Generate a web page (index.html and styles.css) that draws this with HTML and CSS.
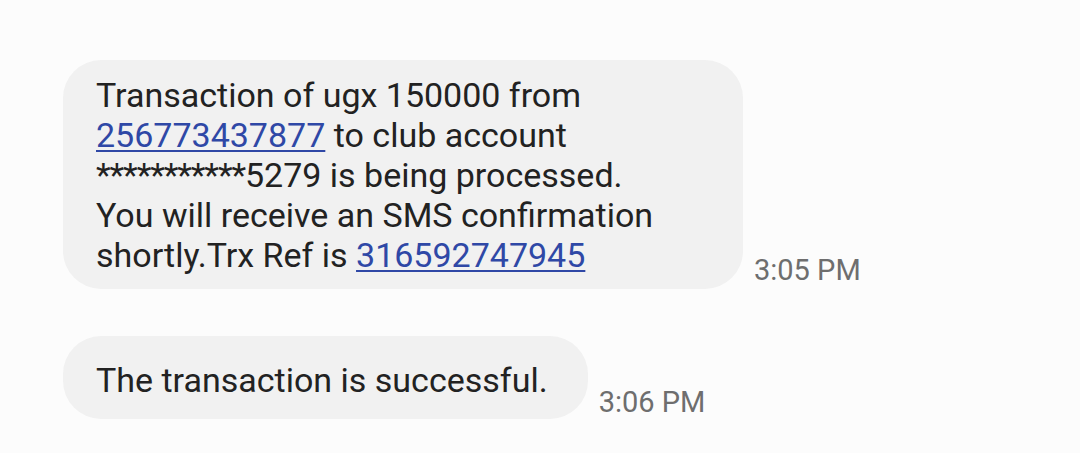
FILE: index.html
```html
<!DOCTYPE html>
<html>
<head>
<meta charset="utf-8">
<link rel="stylesheet" href="styles.css">
</head>
<body>
<div class="thread">
  <div class="row row-first">
    <div class="bubble bubble-wide">
      Transaction of ugx 150000 from<br>
      <a class="link">256773437877</a> to club account<br>
      <span class="mask">***********</span>5279 is being processed.<br>
      You will receive an SMS confirmation<br>
      shortly.Trx Ref is <a class="link">316592747945</a>
    </div>
    <span class="time">3:05 PM</span>
  </div>
  <div class="row row-second">
    <div class="bubble bubble-short">The transaction is successful.</div>
    <span class="time">3:06 PM</span>
  </div>
</div>
</body>
</html>
```
FILE: styles.css
```css
html, body {
  margin: 0;
  padding: 0;
  background: #fcfcfc;
  width: 1080px;
  height: 453px;
  overflow: hidden;
}
.thread {
  display: flex;
  flex-direction: column;
  padding: 60px 0 0 63px;
  font-family: Roboto, "Noto Sans", sans-serif;
}
.row {
  display: flex;
  align-items: flex-end;
  gap: 11px;
}
.row-second {
  margin-top: 47px;
}
.bubble {
  background: #f1f1f1;
  border-radius: 38px;
  color: #222222;
  font-size: 34px;
  line-height: 40px;
}
.bubble-wide {
  width: 614px;
  padding: 15px 33px 14px 33px;
}
.bubble-short {
  padding: 24px 40px 19px 33px;
}
.mask {
  letter-spacing: -1.1px;
}
.link {
  color: #2f48a6;
  text-decoration: underline;
  text-decoration-thickness: 2px;
  text-underline-offset: 3px;
}
.time {
  color: #6e6e6e;
  font-size: 29px;
  line-height: 34px;
  margin-bottom: 2px;
}
.row-second .time {
  margin-bottom: 0;
}
```
